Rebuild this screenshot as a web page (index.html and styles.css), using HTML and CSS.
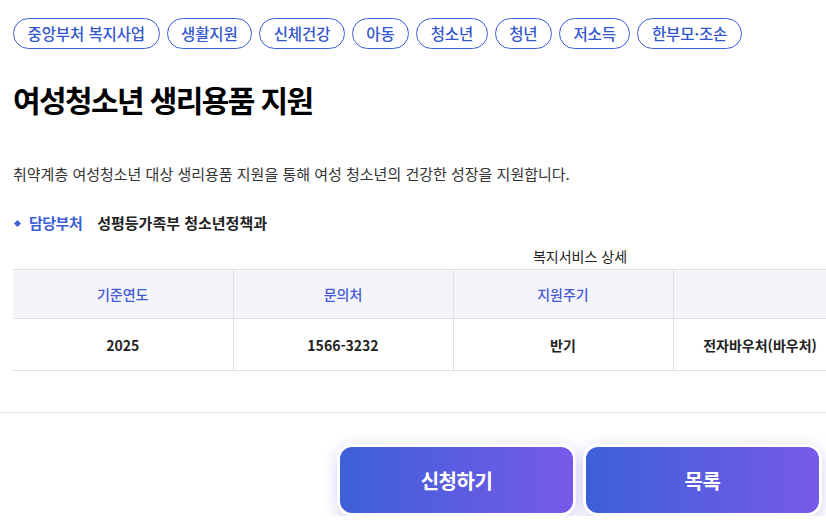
FILE: index.html
```html
<!DOCTYPE html>
<html lang="ko">
<head>
    <meta charset="UTF-8">
    <meta name="viewport" content="width=device-width, initial-scale=1.0">
    <title>여성청소년 생리용품 지원</title>
    <link rel="stylesheet" href="styles.css">
</head>
<body>
    <div class="content">
        <ul class="tags">
            <li>중앙부처 복지사업</li>
            <li>생활지원</li>
            <li>신체건강</li>
            <li>아동</li>
            <li>청소년</li>
            <li>청년</li>
            <li>저소득</li>
            <li>한부모·조손</li>
        </ul>
        <h1 class="title">여성청소년 생리용품 지원</h1>
        <p class="desc">취약계층 여성청소년 대상 생리용품 지원을 통해 여성 청소년의 건강한 성장을 지원합니다.</p>
        <div class="dept">
            <span class="dept-label">담당부처</span>
            <span class="dept-value">성평등가족부 청소년정책과</span>
        </div>
        <div class="table-wrap">
            <table class="detail">
                <caption>복지서비스 상세</caption>
                <colgroup>
                    <col class="c1">
                    <col class="c2">
                    <col class="c3">
                    <col class="c4">
                    <col class="c5">
                </colgroup>
                <thead>
                    <tr>
                        <th>기준연도</th>
                        <th>문의처</th>
                        <th>지원주기</th>
                        <th></th>
                        <th></th>
                    </tr>
                </thead>
                <tbody>
                    <tr>
                        <td>2025</td>
                        <td>1566-3232</td>
                        <td>반기</td>
                        <td>전자바우처(바우처)</td>
                        <td></td>
                    </tr>
                </tbody>
            </table>
        </div>
    </div>
    <div class="actions">
        <button class="btn">신청하기</button>
        <button class="btn">목록</button>
    </div>
</body>
</html>
```
FILE: styles.css
```css
html, body {
    margin: 0;
    padding: 0;
    overflow: hidden;
}
body {
    font-family: "Noto Sans CJK KR", "Noto Sans", sans-serif;
    color: #222;
    background: #fff;
}
.content {
    padding: 18px 0 0 13px;
}
.tags {
    display: flex;
    gap: 7px;
    margin: 0;
    padding: 0;
    list-style: none;
}
.tags li {
    height: 29px;
    padding: 0 13.5px;
    border: 1px solid #3d5fd6;
    border-radius: 16px;
    font-size: 15.5px;
    font-weight: 500;
    line-height: 29px;
    color: #3456cf;
    letter-spacing: -0.1px;
}
.title {
    margin: 30px 0 0;
    font-size: 30px;
    font-weight: 700;
    line-height: 40px;
    letter-spacing: -1.6px;
    color: #000;
}
.desc {
    margin: 45px 0 0;
    font-size: 15px;
    line-height: 20px;
    color: #333;
    letter-spacing: 0;
}
.dept {
    display: flex;
    align-items: center;
    margin-top: 29px;
    font-size: 15px;
    font-weight: 700;
    line-height: 20px;
}
.dept-label {
    position: relative;
    padding-left: 16px;
    color: #3d5fd6;
    letter-spacing: -0.5px;
}
.dept-label::before {
    content: "";
    position: absolute;
    left: 2px;
    top: 8px;
    width: 5px;
    height: 5px;
    background: #3d5fd6;
    transform: rotate(45deg);
}
.dept-value {
    margin-left: 15px;
    color: #222;
    letter-spacing: 0;
}
.table-wrap {
    margin-top: 13px;
    overflow: hidden;
}
.detail {
    width: 1134px;
    border-collapse: collapse;
    table-layout: fixed;
    font-size: 14px;
}
.detail caption {
    padding-bottom: 3px;
    font-size: 14px;
    line-height: 20px;
    color: #222;
}
.c1, .c2, .c3 { width: 220px; }
.c4 { width: 174px; }
.c5 { width: 300px; }
.detail th,
.detail td {
    text-align: center;
    border-left: 1px solid #dedfe3;
}
.detail th:first-child,
.detail td:first-child {
    border-left: 0;
}
.detail thead tr {
    border-top: 1px solid #dedfe3;
    border-bottom: 1px solid #dedfe3;
}
.detail th {
    height: 46px;
    background: #f4f5f9;
    font-weight: 500;
    color: #4458d8;
}
.detail td {
    height: 49px;
    font-weight: 700;
    color: #222;
    border-bottom: 1px solid #dedfe3;
}
.actions {
    display: flex;
    justify-content: flex-end;
    gap: 7px;
    margin-top: 41px;
    padding: 31px 4px 0 0;
    border-top: 1px solid #e2e2e4;
}
.btn {
    width: 239px;
    height: 72px;
    border: 3px solid #fff;
    border-radius: 15px;
    background: linear-gradient(90deg, #3d60d8, #775ae9);
    box-shadow: 0 4px 16px rgba(96, 88, 214, 0.28);
    font-family: inherit;
    font-size: 20px;
    font-weight: 700;
    color: #fff;
    letter-spacing: -0.5px;
    cursor: pointer;
}
```
